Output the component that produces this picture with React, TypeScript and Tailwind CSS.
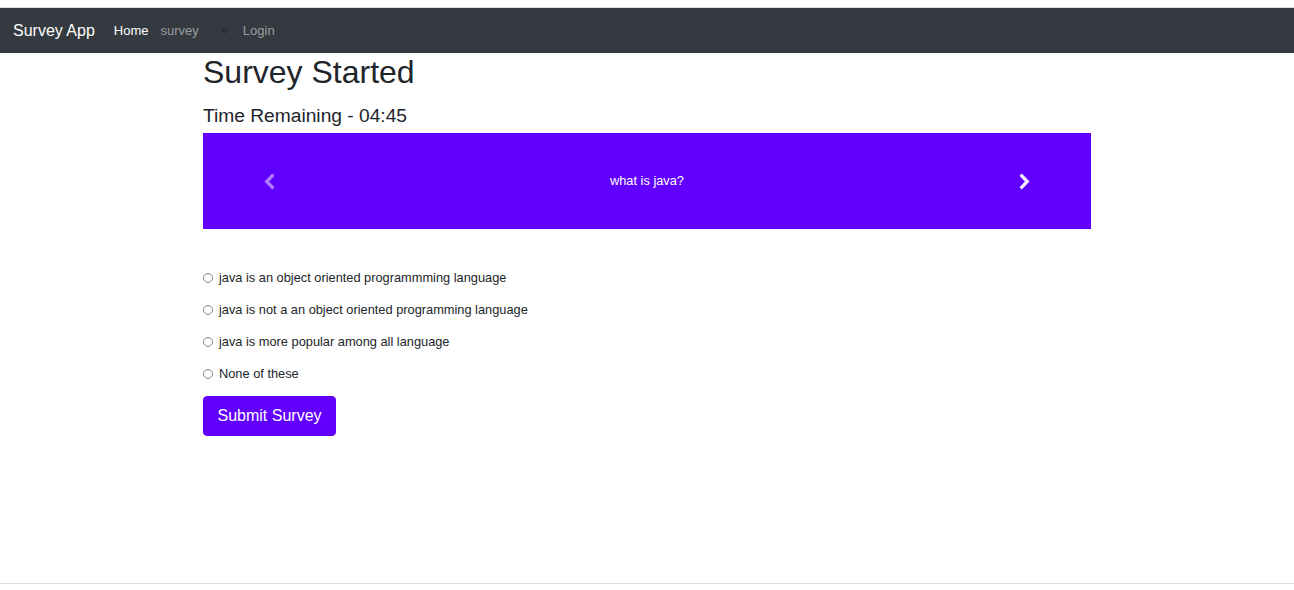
import React from "react";

const options = [
  "java is an object oriented programmming language",
  "java is not a an object oriented programming language",
  "java is more popular among all language",
  "None of these",
];

function Chevron({ dir, className }: { dir: "left" | "right"; className?: string }) {
  return (
    <svg width="11" height="17" viewBox="0 0 11 17" className={className}>
      {dir === "right" ? (
        <polygon points="2.8,0.5 10.5,8.5 2.8,16.5 0.5,14.2 5.9,8.5 0.5,2.8" fill="currentColor" />
      ) : (
        <polygon points="8.2,0.5 0.5,8.5 8.2,16.5 10.5,14.2 5.1,8.5 10.5,2.8" fill="currentColor" />
      )}
    </svg>
  );
}

export default function App() {
  return (
    <div className="h-[590px] flex flex-col bg-white font-['Liberation_Sans',Arial,sans-serif] text-[#212529]">
      <div className="h-[8px] border-b border-[#dedede] bg-white" />
      <nav className="h-[45px] bg-[#343a40] flex items-center pl-[13px]">
        <span className="text-white text-[16px] leading-[20px]">Survey App</span>
        <span className="ml-[19px] text-white text-[13px] leading-[20px]">Home</span>
        <span className="ml-[12px] text-[#9a9da0] text-[13px] leading-[20px]">survey</span>
        <span className="ml-[23px] w-[5px] h-[5px] rounded-full border border-[#1e2227]" />
        <span className="ml-[16px] text-[#9a9da0] text-[13px] leading-[20px]">Login</span>
      </nav>
      <main className="flex-1">
        <div className="w-[888px] mx-auto">
          <h1 className="text-[32px] leading-[38px] m-0">Survey Started</h1>
          <h2 className="text-[19.2px] leading-[23px] mt-[13px]">Time Remaining - 04:45</h2>
          <div className="mt-[6px] h-[96px] bg-[#6200ff] flex items-center">
            <div className="w-[133px] flex justify-center text-[#b07fff]">
              <Chevron dir="left" />
            </div>
            <div className="flex-1 text-center text-white text-[12.8px] leading-[16px]">what is java?</div>
            <div className="w-[133px] flex justify-center text-[#f4eeff]">
              <Chevron dir="right" />
            </div>
          </div>
          <div className="mt-[33px] flex flex-col">
            {options.map((o) => (
              <label key={o} className="h-[32px] flex items-center text-[12.8px] leading-[16px]">
                <span className="w-[10px] h-[10px] rounded-full border border-[#858585] bg-white" />
                <span className="ml-[6px]">{o}</span>
              </label>
            ))}
          </div>
          <button className="mt-[6px] h-[40px] px-[13.5px] rounded-[4px] bg-[#6200ff] border border-[#5c00f0] text-white text-[16px] leading-[24px]">
            Submit Survey
          </button>
        </div>
      </main>
      <footer className="h-[7px] border-t border-[#dcdcdc]" />
    </div>
  );
}
